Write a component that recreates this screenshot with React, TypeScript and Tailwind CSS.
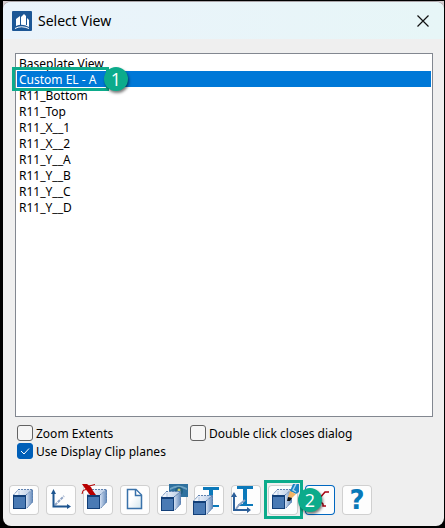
import { useState } from "react";
import type { ReactNode } from "react";

// Views listed in the dialog
const VIEWS = [
  "Baseplate View",
  "Custom EL - A",
  "R11_Bottom",
  "R11_Top",
  "R11_X__1",
  "R11_X__2",
  "R11_Y__A",
  "R11_Y__B",
  "R11_Y__C",
  "R11_Y__D",
];

// Drawing area shared by all toolbar icons
function Icon({ children }: { children: ReactNode }) {
  return (
    <svg viewBox="0 0 30 30" className="size-full overflow-visible" aria-hidden="true">
      {children}
    </svg>
  );
}

// Blue 3D box, x and y move the whole box
function Cube({ x = 0, y = 0 }: { x?: number; y?: number }) {
  return (
    <g transform={`translate(${x} ${y})`}>
      <defs>
        <linearGradient id="cubeTop" x1="0" y1="0" x2="1" y2="0">
          <stop offset="0" stopColor="#ffffff" />
          <stop offset="1" stopColor="#b4c8e4" />
        </linearGradient>
        <linearGradient id="cubeSide" x1="0" y1="0" x2="1" y2="0">
          <stop offset="0" stopColor="#d4e0f2" />
          <stop offset="1" stopColor="#5f86b8" />
        </linearGradient>
      </defs>
      <path d="M4 10L9 4.500H24L17 10Z" fill="url(#cubeTop)" />
      <path d="M17 10L24 4.500V17L17 24Z" fill="url(#cubeSide)" />
      <path d="M4.500 10L9 5M9 4.500H24M23.500 5V17L17.500 23.500M17 10L23.500 4.500" fill="none" stroke="#5f82b0" strokeDasharray="2 1" />
      <path d="M10 6V10" stroke="#b4c8e4" />
      <rect x="4.500" y="10.500" width="12" height="13" fill="#4a7ab4" stroke="#123f78" />
      <path d="M4 11H17" stroke="#123f78" strokeWidth="2" />
    </g>
  );
}

function Axes() {
  return (
    <>
      <path d="M9 20L18 11" stroke="#8fa3c4" strokeWidth="2" strokeDasharray="3 1" />
      <path d="M7.500 7V21.500H23" fill="none" stroke="#1d5590" strokeWidth="2" />
      <path d="M5 9L7.500 4L10 9ZM21 19L25 21.500L21 24Z" fill="#1d5590" />
    </>
  );
}

function Beam({ x = 0, y = 0 }: { x?: number; y?: number }) {
  return (
    <path
      transform={`translate(${x} ${y})`}
      d="M9 2H25V5H19V20H25V22H10V20H15V5H9Z"
      fill="#0c79ba"
    />
  );
}

// Toolbar buttons from left to right
const TOOLS: { label: string; icon: ReactNode }[] = [
  { label: "Set view", icon: <Icon><Cube /></Icon> },
  { label: "Set coordinate system", icon: <Icon><Axes /></Icon> },
  {
    label: "Delete view",
    icon: (
      <Icon>
        <Cube />
        <path d="M-1 -1H4L8 2L10 6L13 10H7L4 6L1 2Z" fill="#b80000" />
        <path d="M6 1L12 -0.500M3 4.500L0 5.500L-1 9" fill="none" stroke="#b80000" />
      </Icon>
    ),
  },
  {
    label: "New view",
    icon: (
      <Icon>
        <defs>
          <linearGradient id="page" x1="0" y1="0" x2="1" y2="1">
            <stop offset="0.400" stopColor="#ffffff" />
            <stop offset="1" stopColor="#d2e6ee" />
          </linearGradient>
        </defs>
        <path d="M7.500 4.500H16L21.500 10V23.500H7.500Z" fill="url(#page)" stroke="#3972aa" strokeWidth="1.500" />
        <path d="M15.500 5V10.500H21" fill="#ffffff" stroke="#3972aa" strokeWidth="1.500" />
      </Icon>
    ),
  },
  {
    label: "Show view",
    icon: (
      <Icon>
        <rect x="12" y="-1" width="19" height="13" fill="#2f719f" />
        <path d="M13 3Q21 -2 30 3V5Q21 0 13 5Z" fill="#6fa3c2" />
        <circle cx="22" cy="6" r="4" fill="#236083" />
        <circle cx="22" cy="5" r="1.500" fill="#c8cf72" />
        <Cube y={2} />
      </Icon>
    ),
  },
  { label: "View on member", icon: <Icon><Beam /><Cube x={-5} y={6} /></Icon> },
  {
    label: "Member coordinate system",
    icon: (
      <Icon>
        <Beam x={-3} y={-1} />
        <path d="M5 24L8 20L14 15" fill="none" stroke="#8fa3c4" strokeWidth="2" />
        <path d="M3 10V25H17" fill="none" stroke="#2c5f99" strokeWidth="2" />
        <path d="M0 12L3 7L6 12ZM16 22L20 25L16 28Z" fill="#2c5f99" />
      </Icon>
    ),
  },
  {
    label: "Modify view",
    icon: (
      <Icon>
        <Cube />
        <path d="M25 -1H31V7L28 9L22 6Z" fill="#1b83c4" />
        <path d="M28 -1L25 5L28 7" fill="none" stroke="#a8d4ee" strokeWidth="1.500" />
        <path d="M22 6L28 9L24 13L20 12Z" fill="#f2b566" />
        <path d="M20 12L24 13L22 16H19Z" fill="#111111" />
      </Icon>
    ),
  },
  {
    label: "Cancel",
    icon: (
      <Icon>
        <path d="M24 7H20L7 22M6 7L18 19V21H21" fill="none" stroke="#a80010" strokeWidth="1.500" />
      </Icon>
    ),
  },
  { label: "Help", icon: "?" },
];

// Numbered green marker
function Badge({ children }: { children: ReactNode }) {
  return (
    <span className="grid size-6 place-items-center rounded-full bg-[#0cab8b] font-['Open_Sans',sans-serif] text-lg leading-6 text-white shadow-[1px_2px_3px_#0008]">
      {children}
    </span>
  );
}

function Check({ label, defaultChecked = false }: { label: string; defaultChecked?: boolean }) {
  return (
    <label className="flex h-4 gap-[3px] leading-[18px] whitespace-nowrap">
      <span className="grid size-4">
        <input
          type="checkbox"
          defaultChecked={defaultChecked}
          className="peer col-start-1 row-start-1 size-4 appearance-none rounded-[3px] border border-[#626262] bg-[#f5f5f5] checked:border-[#005fb8] checked:bg-[#005fb8]"
        />
        <svg viewBox="0 0 16 16" className="pointer-events-none invisible col-start-1 row-start-1 size-4 peer-checked:visible" aria-hidden="true">
          <path d="M4 8L7 11L12 5.500" fill="none" stroke="#ffffff" />
        </svg>
      </span>
      {label}
    </label>
  );
}

export default function App() {
  const [selected, setSelected] = useState("Custom EL - A");

  return (
    <div className="bg-black pt-px pr-px pb-0.5 pl-[3px] font-['Noto_Sans',sans-serif] text-xs text-black">
      <div className="bg-linear-to-b from-[#d3cbcf] from-50% to-black to-50%">
        <main className="overflow-hidden rounded-lg border-t border-[#aaa5a9] bg-[#efefef]">
          {/* Title bar */}
          <header className="flex h-[37px] items-center bg-linear-to-r from-[#eaf3fb] to-[#e7f6f7] pr-[15px] pl-[9px]">
            <svg viewBox="0 0 20 20" className="size-5" aria-hidden="true">
              <rect width="20" height="20" rx="1" fill="#1c5796" />
              <path d="M4 15V8L8 5V13L9 13V6L12 3L14 5V13L15 13V7L17 9V16Q10 12 4 15Z" fill="#ffffff" />
              <path d="M3 17.500Q9 14 17 17.500" fill="none" stroke="#ffffff" />
              <path d="M8.500 6V14M14.500 7V14" stroke="#1c5796" />
            </svg>
            <h1 className="ml-1.5 flex-1 text-sm">Select View</h1>
            <button type="button" aria-label="Close" className="size-3">
              <svg viewBox="0 0 12 12" className="size-full" aria-hidden="true">
                <path d="M0.500 0.500L11.500 11.500M11.500 0.500L0.500 11.500" stroke="#111111" strokeWidth="1.200" />
              </svg>
            </button>
          </header>

          {/* List of views */}
          <ul role="listbox" aria-label="Views" className="mt-3.5 mr-[11px] ml-3 h-[364px] border border-[#828790] bg-white p-px">
            {VIEWS.map((view) => (
              <li
                key={view}
                role="option"
                aria-selected={view === selected}
                onClick={() => setSelected(view)}
                className={
                  view === selected
                    ? "relative h-4 bg-[#0078d7] pl-0.5 leading-[18px] text-white"
                    : "relative h-4 pl-0.5 leading-[18px]"
                }
              >
                {view}
                {view === "Custom EL - A" && (
                  <span className="pointer-events-none absolute -top-1 -left-[5px] z-10 flex h-6 w-[97px] items-center border-3 border-[#0cab8b]">
                    <span className="absolute left-[89px]"><Badge>1</Badge></span>
                  </span>
                )}
              </li>
            ))}
          </ul>

          {/* Options */}
          <div className="mt-2 ml-3.5 grid grid-cols-[173px_auto] justify-start gap-y-0.5">
            <Check label="Zoom Extents" />
            <Check label="Double click closes dialog" />
            <Check label="Use Display Clip planes" defaultChecked />
          </div>

          {/* Toolbar */}
          <div className="mt-[26px] flex gap-[7px] pb-[11px] pl-1.5">
            {TOOLS.map((tool) => (
              <div key={tool.label} className="relative size-[30px]">
                <button
                  type="button"
                  aria-label={tool.label}
                  className={
                    tool.label === "Cancel"
                      ? "block size-full rounded-sm bg-[#fdfdfd] inset-ring inset-ring-[#0067c0]"
                      : "block size-full rounded-sm bg-[#fdfdfd] font-['DejaVu_Sans',sans-serif] text-[26px] leading-[30px] font-bold text-[#0878b8] inset-ring inset-ring-[#d0d0d0]"
                  }
                >
                  {tool.icon}
                </button>
                {tool.label === "Modify view" && (
                  <span className="pointer-events-none absolute -top-[5px] -left-1 z-10 flex h-[39px] w-[39px] items-center border-3 border-[#0cab8b]">
                    <span className="absolute left-[31px]"><Badge>2</Badge></span>
                  </span>
                )}
              </div>
            ))}
          </div>
        </main>
      </div>
    </div>
  );
}
